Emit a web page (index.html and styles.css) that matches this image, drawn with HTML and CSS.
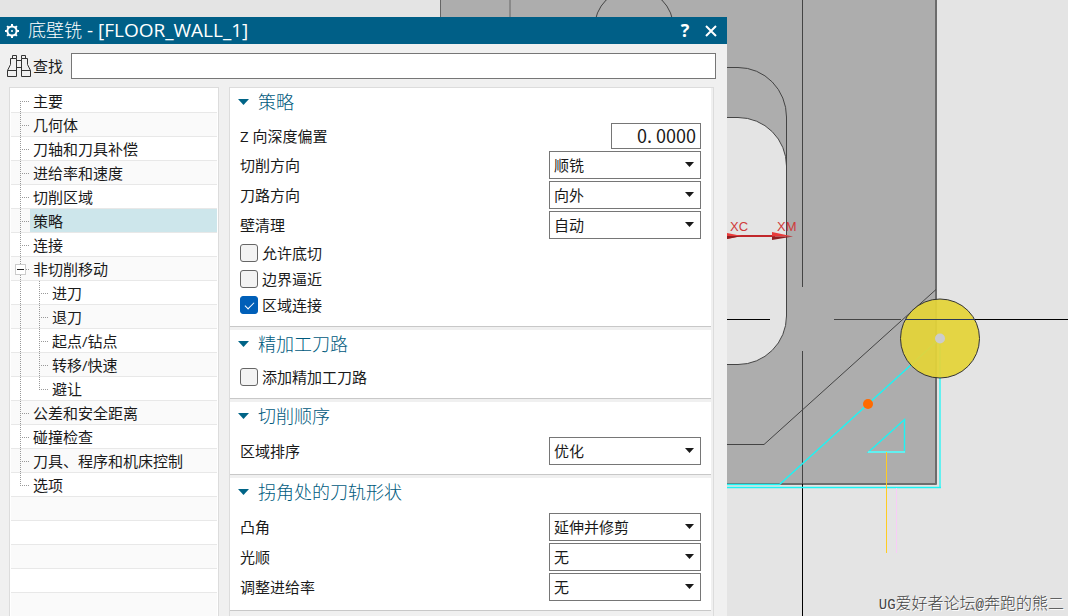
FILE: index.html
```html
<!DOCTYPE html>
<html lang="zh-CN">
<head>
<meta charset="utf-8">
<title>底壁铣 - [FLOOR_WALL_1]</title>
<link rel="stylesheet" href="styles.css">
</head>
<body>
<svg class="scene" aria-hidden="true">
  <rect class="part" x="440" y="-10" width="496" height="494"/>
  <path class="edge-soft" d="M440.500 0V484M510 0V484"/>
  <path class="edge-wide" d="M936 0V484.500M727 484H936.500"/>
  <circle class="edge" cx="634" cy="28" r="39.500"/>
  <path class="hole" d="M700 117.500H738A48.500 48.500 0 0 1 786.500 166V316A48.500 48.500 0 0 1 738 364.500H700Z"/>
  <path class="edge" d="M700 67.500H738A48.500 49.500 0 0 1 786.500 117V316M936 289.500L764 444.500H700"/>
  <path class="cross-soft" d="M802.500 0V287M802.500 351V484M834 319.500H901"/>
  <path class="cross" d="M802.500 484V2000M727 319.500H770M936 319.500H4000"/>
  <path class="toolpath" d="M940 338.500L779.500 484.500H700"/>
  <path class="toolpath-light" d="M940 338V488"/>
  <path class="toolpath" d="M700 487.500H941"/>
  <path class="toolpath" d="M904.500 419.500V452H868.500Z"/>
  <path class="toolpath-light" d="M868 452H905"/>
  <path class="approach" d="M886.500 452V553"/>
  <path class="retract" d="M896.500 488V553"/>
  <circle class="tool" cx="940" cy="338.500" r="39.500"/>
  <path class="tool-cross" d="M905 319.500H975"/>
  <circle class="tool-center" cx="940" cy="338.500" r="5"/>
  <circle class="marker" cx="868" cy="404" r="5"/>
  <path class="axis" d="M727 236H775"/>
  <path class="arrow" d="M727 233L742 236L727 239ZM772 232L793 236.500L772 236.500Z"/>
  <path class="arrow-dark" d="M727 236L742 236L727 239ZM772 236.500L793 236.500L772 240Z"/>
  <text class="axis-label" x="730" y="231">XC</text>
  <text class="axis-label" x="777" y="231">XM</text>
</svg>
<div class="watermark"><span class="watermark-latin">UG</span>爱好者论坛<span class="watermark-latin">@</span>奔跑的熊二</div>

<main class="workspace">
<section class="dialog" aria-labelledby="dialog-title">
  <header class="titlebar">
    <svg class="gear" viewBox="0 0 16 16" aria-hidden="true">
      <circle cx="8" cy="8" r="4.600"/>
      <path d="M8 1V3.500M8 12.500V15M1 8H3.500M12.500 8H15M3.100 3.100L4.800 4.800M11.200 11.200L12.900 12.900M12.900 3.100L11.200 4.800M4.800 11.200L3.100 12.900"/>
      <circle class="gear-dot" cx="8" cy="8" r="1"/>
    </svg>
    <h1 class="title" id="dialog-title">底壁铣<span class="title-name"> - [FLOOR_WALL_1]</span></h1>
    <button class="title-button" type="button">?</button>
    <button class="title-button" type="button" aria-label="关闭"><svg class="close" viewBox="0 0 12 12"><path d="M1 1L11 11M11 1L1 11"/></svg></button>
  </header>

  <div class="search">
    <svg class="binoculars" viewBox="0 0 24 22" aria-hidden="true">
      <path d="M5.500 3.500V.500H9.500V3.500M14.500 3.500V.500H18.500V3.500M3.500 3.500H9.500V21.500H.500V15.500L3.500 9.500ZM14.500 3.500H20.500V9.500L23.500 15.500V21.500H14.500ZM.500 15.500H9.500M14.500 15.500H23.500M9.500 5.500H14.500M9.500 12.500H14.500"/>
    </svg>
    <label for="find">查找</label>
    <input class="search-box" id="find" type="text">
  </div>

  <div class="content">
    <nav class="tree">
      <ul class="branch">
        <li class="node"><button class="leaf" type="button">主要</button></li>
        <li class="node"><button class="leaf" type="button">几何体</button></li>
        <li class="node"><button class="leaf" type="button">刀轴和刀具补偿</button></li>
        <li class="node"><button class="leaf" type="button">进给率和速度</button></li>
        <li class="node"><button class="leaf" type="button">切削区域</button></li>
        <li class="node"><button class="leaf selected" type="button" aria-current="page">策略</button></li>
        <li class="node"><button class="leaf" type="button">连接</button></li>
        <li class="node">
          <button class="expander" type="button" aria-label="折叠" aria-expanded="true"></button>
          <button class="leaf" type="button">非切削移动</button>
          <ul class="branch nested">
            <li class="node"><button class="leaf" type="button">进刀</button></li>
            <li class="node"><button class="leaf" type="button">退刀</button></li>
            <li class="node"><button class="leaf" type="button">起点/钻点</button></li>
            <li class="node"><button class="leaf" type="button">转移/快速</button></li>
            <li class="node"><button class="leaf" type="button">避让</button></li>
          </ul>
        </li>
        <li class="node"><button class="leaf" type="button">公差和安全距离</button></li>
        <li class="node"><button class="leaf" type="button">碰撞检查</button></li>
        <li class="node"><button class="leaf" type="button">刀具、程序和机床控制</button></li>
        <li class="node"><button class="leaf" type="button">选项</button></li>
      </ul>
    </nav>

    <form class="panel">
      <section class="group">
        <h2 class="group-title"><button class="group-toggle" type="button">策略</button></h2>
        <div class="field number"><label for="depth">Z 向深度偏置</label><input class="number-box" id="depth" type="text" value="0. 0000"></div>
        <div class="field"><label for="cut">切削方向</label><span class="picker"><select id="cut"><option>顺铣</option></select></span></div>
        <div class="field"><label for="path">刀路方向</label><span class="picker"><select id="path"><option>向外</option></select></span></div>
        <div class="field"><label for="wall">壁清理</label><span class="picker"><select id="wall"><option>自动</option></select></span></div>
        <label class="check"><input type="checkbox">允许底切</label>
        <label class="check"><input type="checkbox">边界逼近</label>
        <label class="check"><input type="checkbox" checked>区域连接</label>
      </section>
      <section class="group">
        <h2 class="group-title"><button class="group-toggle" type="button">精加工刀路</button></h2>
        <label class="check"><input type="checkbox">添加精加工刀路</label>
      </section>
      <section class="group">
        <h2 class="group-title"><button class="group-toggle" type="button">切削顺序</button></h2>
        <div class="field"><label for="order">区域排序</label><span class="picker"><select id="order"><option>优化</option></select></span></div>
      </section>
      <section class="group">
        <h2 class="group-title"><button class="group-toggle" type="button">拐角处的刀轨形状</button></h2>
        <div class="field"><label for="convex">凸角</label><span class="picker"><select id="convex"><option>延伸并修剪</option></select></span></div>
        <div class="field"><label for="smooth">光顺</label><span class="picker"><select id="smooth"><option>无</option></select></span></div>
        <div class="field"><label for="feed">调整进给率</label><span class="picker"><select id="feed"><option>无</option></select></span></div>
      </section>
    </form>
  </div>
</section>
</main>
</body>
</html>
```

FILE: styles.css
```css
* { box-sizing: border-box; }

body {
  margin: 0;
  background: #e4e4e4;
  color: #1a1a1a;
  font: 15px/24px "Open Sans", "Noto Sans CJK SC", sans-serif;
  overflow: hidden;
}

button, input, select { font: inherit; color: inherit; }
button { border: 0; background: none; padding: 0; }

/* Graphics window behind the dialog */
.scene { position: absolute; inset: 0; width: 100%; height: 100%; fill: none; }
.part { fill: #adadad; }
.hole { fill: #e4e4e4; stroke: #444; }
.edge { stroke: #444; }
.edge-soft { stroke: #666; }
.edge-wide { stroke: #6c6c6c; stroke-width: 2; }
.cross { stroke: #000; }
.cross-soft { stroke: #444; }
.toolpath { stroke: #1cf4f4; stroke-width: 1.400; }
.toolpath-light { stroke: #62f0f0; stroke-width: 2; }
.approach { stroke: #fc2; }
.retract { stroke: #f8ccf8; }
.tool { fill: #e3d339; fill-opacity: .94; stroke: #333; }
.tool-cross { stroke: #2c3a55; }
.tool-center { fill: #ccc; }
.marker { fill: #ff6a00; }
.axis { stroke: #c1272b; stroke-width: 2; }
.arrow { fill: #e83a3a; }
.arrow-dark { fill: #8f1f22; }
.axis-label { fill: #d03a3a; font: 13px "Liberation Sans", sans-serif; }

.watermark {
  position: absolute;
  right: 4px;
  bottom: 0;
  color: #444;
  font-size: 16px;
  font-weight: 300;
  line-height: 22px;
  white-space: nowrap;
  text-shadow: 1px 1px #fff;
}
.watermark-latin { font-family: "Liberation Mono", monospace; font-size: 14px; }

.workspace {
  position: relative;
  display: grid;
  grid-template-columns: minmax(0, 727fr) minmax(0, 341fr);
  height: 100vh;
  padding-top: 17px;
  pointer-events: none;
}

.dialog {
  display: flex;
  flex-direction: column;
  min-height: 0;
  background: #f0f0f0;
  pointer-events: auto;
}

.titlebar {
  display: flex;
  align-items: center;
  height: 27px;
  padding: 0 7px 0 4px;
  background: #005f87;
  color: #fff;
}
.gear { width: 16px; height: 16px; margin-right: 8px; fill: none; stroke: #fff; stroke-width: 2; }
.gear-dot { fill: #fff; stroke: none; }
.title { flex: 1; margin: 0; font-size: 18px; font-weight: 300; line-height: 27px; }
.title-name { font-size: 19px; font-weight: 400; }
.title-button { width: 18px; height: 27px; margin-left: 8px; font-size: 18px; font-weight: 700; line-height: 27px; }
.close { display: block; width: 12px; height: 12px; margin: 0 auto; fill: none; stroke: #fff; stroke-width: 2; }

.search {
  display: flex;
  align-items: center;
  padding: 9px 11px 8px 7px;
  gap: 2px;
}
.binoculars { width: 24px; height: 22px; fill: none; stroke: #333; }
.search-box { flex: 1; height: 26px; margin-left: 6px; padding: 0 5px; border: 1px solid #767676; background: #fff; }

.content {
  flex: 1;
  display: grid;
  grid-template-columns: 210fr 485fr;
  gap: 10px;
  min-height: 0;
  padding: 0 13px 0 9px;
}

.tree {
  padding: 1px 1px 0;
  border: 1px solid #dcdcdc;
  border-bottom: 0;
  background: #fff;
  overflow: hidden;
}
.branch { margin: 0; padding: 0; list-style: none; }
.tree > .branch {
  height: 100%;
  background: repeating-linear-gradient(#fff 0 23px, #e8e8e8 23px 24px, #fafafa 24px 47px, #e8e8e8 47px 48px);
}
.node { position: relative; padding-left: 19px; }
.node::before {
  content: "";
  position: absolute;
  left: 9px;
  top: 0;
  width: 1px;
  height: 100%;
  background: repeating-linear-gradient(#999 0 1px, transparent 1px 2px);
}
.tree > .branch > .node:first-child::before { top: 12px; height: 12px; }
.node:last-child::before { height: 12px; }
.node::after {
  content: "";
  position: absolute;
  left: 9px;
  top: 12px;
  width: 10px;
  height: 1px;
  background: repeating-linear-gradient(90deg, #999 0 1px, transparent 1px 2px);
}
.leaf { display: block; width: 100%; height: 24px; padding: 0 3px; text-align: left; white-space: nowrap; }
.selected { height: 23px; margin-bottom: 1px; background: #cde6eb; }
.expander {
  position: absolute;
  z-index: 1;
  left: 4px;
  top: 7px;
  width: 11px;
  height: 11px;
  border: 1px solid #ccc;
  background: linear-gradient(#222, #222) center / 7px 1px no-repeat #fff;
}

.panel {
  display: flex;
  flex-direction: column;
  gap: 3px;
  padding-right: 2px;
  border: 1px solid #dcdcdc;
  border-bottom: 0;
  overflow: hidden;
}
.group { padding: 0 10px 8px; border-bottom: 1px solid #c8c8c8; background: #fff; }
.group-title { margin: 0 0 6px; font-size: 18px; font-weight: 300; line-height: 28px; }
.group-toggle { display: flex; align-items: center; height: 28px; gap: 9px; color: #005a7d; }
.group-toggle::before {
  content: "";
  width: 11px;
  height: 6px;
  margin-left: -2px;
  background: #006487;
  clip-path: polygon(0 0, 100% 0, 50% 100%);
}
.field { display: flex; align-items: center; justify-content: space-between; height: 30px; }
.number { height: 28px; }
.number-box {
  width: 90px;
  height: 26px;
  padding: 0 4px 2px;
  border: 1px solid #767676;
  background: #fff;
  font: 18px/22px "Noto Sans CJK SC", sans-serif;
  text-align: right;
}
.picker { position: relative; width: 152px; height: 28px; }
.picker::after {
  content: "";
  position: absolute;
  right: 7px;
  top: 11px;
  width: 9px;
  height: 5px;
  background: #1a1a1a;
  clip-path: polygon(0 0, 100% 0, 50% 100%);
  pointer-events: none;
}
.picker select {
  appearance: none;
  width: 100%;
  height: 28px;
  padding: 0 20px 0 4px;
  border: 1px solid #767676;
  border-radius: 0;
  background: #fff;
}
.check { display: flex; align-items: center; height: 26px; gap: 4px; }
.check input {
  appearance: none;
  position: relative;
  width: 18px;
  height: 18px;
  margin: 0;
  border: 1px solid #666;
  border-radius: 3px;
  background: #f3f3f3;
}
.check input:checked { border-color: #005fb8; background: #005fb8; }
.check input:checked::after {
  content: "";
  position: absolute;
  left: 4px;
  top: 5px;
  width: 8px;
  height: 4px;
  border: solid #fff;
  border-width: 0 0 1px 1px;
  transform: rotate(-45deg);
}
```
